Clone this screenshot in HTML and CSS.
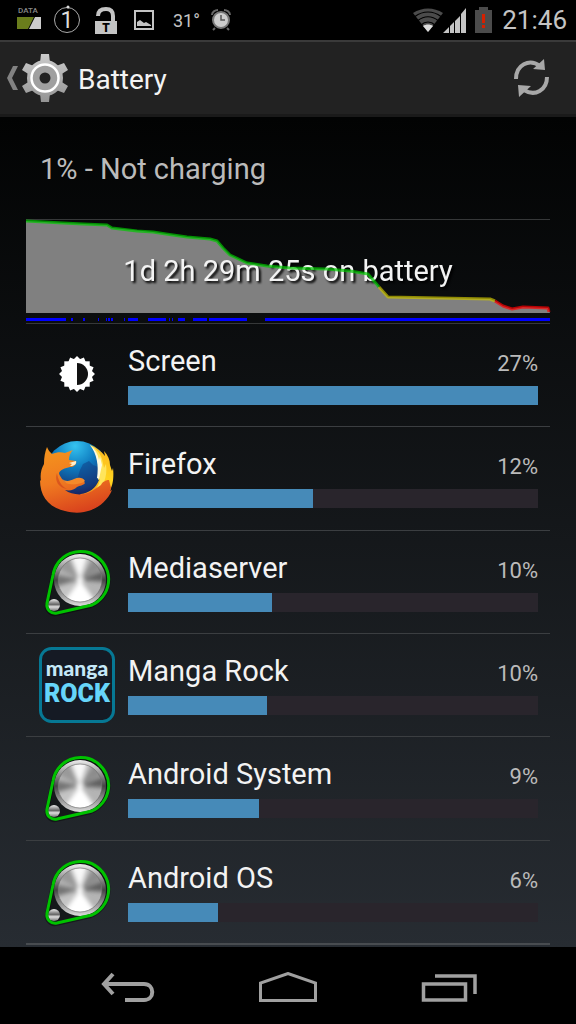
FILE: index.html
```html
<!DOCTYPE html>
<html lang="en">
<head>
<meta charset="utf-8">
<meta name="viewport" content="width=device-width, initial-scale=1">
<title>Battery</title>
<link rel="stylesheet" href="styles.css">
</head>
<body>
<svg class="defs" width="0" height="0" aria-hidden="true">
  <defs>
    <linearGradient id="disc" x1="0" y1="0" x2="0" y2="1"><stop offset="0" stop-color="#eee"/><stop offset=".5" stop-color="#444"/><stop offset="1" stop-color="#ddd"/></linearGradient>
    <linearGradient id="small" x1="0" y1="0" x2="0" y2="1"><stop offset="0" stop-color="#eee"/><stop offset=".45" stop-color="#666"/><stop offset=".65" stop-color="#ddd"/><stop offset="1" stop-color="#777"/></linearGradient>
    <filter id="soft" x="-20%" y="-20%" width="140%" height="140%"><feGaussianBlur stdDeviation="2"/></filter>
    <clipPath id="face"><circle cx="41" cy="36" r="22"/></clipPath>
    <symbol id="service" viewBox="0 0 76 76">
      <path d="M14 31 8 60a8 8 0 0 0 9 10l35-8A28 28 0 1 0 14 31Z" fill="#15181a" stroke="#000" stroke-opacity=".4" stroke-width="4"/>
      <circle cx="41" cy="36" r="26" fill="url(#disc)"/>
      <g clip-path="url(#face)">
        <circle cx="41" cy="36" r="23" fill="#b4b4b4"/>
        <g filter="url(#soft)">
          <path d="M41 36 14 44V30Z" fill="#747474"/>
          <path d="M41 36 16 22 28 10Z" fill="#999"/>
          <path d="M41 36 66 26V38Z" fill="#606060"/>
          <path d="M41 36 56 12 66 24Z" fill="#8c8c8c"/>
          <path d="M41 36 30 8H50Z" fill="#f8f8f8"/>
          <path d="M41 36 22 62H60Z" fill="#fff"/>
          <path d="M41 36 14 44 24 58Z" fill="#c4c4c4"/>
          <circle cx="41" cy="36" r="3" fill="#fff"/>
        </g>
      </g>
      <circle cx="41" cy="36" r="22" fill="none" stroke="#666" stroke-opacity=".6"/>
      <circle cx="15" cy="61" r="6" fill="url(#small)"/>
      <path d="M14 31 8 59c-1 7 4 11 10 10l35-8A28 28 0 1 0 14 31Z" fill="none" stroke="#00c200" stroke-width="3"/>
    </symbol>
  </defs>
</svg>

<header class="status">
  <div class="status-group">
    <svg width="24" height="30" viewBox="0 0 24 30" role="img" aria-label="Data usage">
      <text class="data-label" x="1" y="8">DATA</text>
      <path d="M0 12H17L11 24H0Z" fill="#6a7d1c"/><path d="M18 12h6v12H12Z" fill="#ccc"/>
    </svg>
    <svg class="ring" width="28" height="30" viewBox="0 0 28 30" role="img" aria-label="1">
      <circle cx="14" cy="15" r="12.500" fill="none" stroke="#aaa"/><circle cx="15" cy="2" r="1.500" fill="#ddd"/>
      <text class="ring-number" x="14" y="23">1</text>
    </svg>
    <svg class="lock" width="24" height="30" viewBox="0 0 24 30" role="img" aria-label="Unlocked">
      <path d="M4 11C4 6 7 4 12 4c5 0 7 3 7 7v6" fill="none" stroke="#c4c4c4" stroke-width="4"/>
      <path d="M1 16h22v13H1Z" fill="#c4c4c4"/><text class="lock-letter" x="12" y="27">T</text>
    </svg>
    <svg class="photo" width="20" height="20" viewBox="0 0 20 20" role="img" aria-label="Picture"><path d="M1 1h18v18H1Z" fill="none" stroke="#c4c4c4" stroke-width="2"/><path d="M3 16v-4l3-2 4 3 2-1 5 3v1Z" fill="#c4c4c4"/></svg>
    <span class="temperature">31°</span>
    <svg class="alarm" width="22" height="24" viewBox="0 0 22 24" role="img" aria-label="Alarm">
      <path d="M2 7c0-3 3-5 6-5M20 7c0-3-3-5-6-5M5 20l-2 2M17 20l2 2" fill="none" stroke="#666" stroke-width="2"/>
      <circle cx="11" cy="12" r="8" fill="#ccc" stroke="#777" stroke-width="2"/><path d="M11 7v5h4" fill="none" stroke="#555" stroke-width="1.500"/>
    </svg>
  </div>
  <div class="status-group">
    <svg width="30" height="24" viewBox="0 0 30 24" role="img" aria-label="Wi-Fi">
      <path d="M15 24 0 5C9-1 21-1 30 5Z" fill="#4b4b4b"/><path d="M2 8.500c8-6 18-6 26 0M5 12.500c6-5 14-5 20 0M8 17c4-4 10-4 14 0" fill="none" stroke="#000" stroke-width="1.200"/><path d="m15 24-5-6c3-2 7-2 10 0Z" fill="#ddd"/>
    </svg>
    <svg width="24" height="26" viewBox="0 0 24 26" role="img" aria-label="Signal"><path d="M0 26 6 20v6ZM7 19l4-4v11H7ZM12 14l5-5v17h-5ZM18 7l5-6v25h-5Z" fill="#c4c4c4"/></svg>
    <svg class="cell" width="17" height="26" viewBox="0 0 17 26" role="img" aria-label="Battery low"><path d="M0 3h4V0h9v3h4v23H0Z" fill="#4b4b4b"/><path d="M7 7h3v9H7ZM7 18h3v3H7Z" fill="#d42000"/></svg>
    <time class="clock">21:46</time>
  </div>
</header>

<nav class="action-bar">
  <a class="up" href="#">
    <svg width="12" height="24" viewBox="0 0 12 24" aria-hidden="true"><path d="M7 0h5L6 12l6 12H7L1 12Z" fill="#828282"/></svg>
    <svg width="46" height="50" viewBox="0 0 46 50" aria-hidden="true">
      <defs><linearGradient id="gear" gradientUnits="userSpaceOnUse" x1="0" y1="0" x2="0" y2="50"><stop offset="0" stop-color="#ccc"/><stop offset="1" stop-color="#939393"/></linearGradient></defs>
      <g fill="url(#gear)">
        <circle cx="23" cy="25" r="18"/>
        <path d="M18 10 19 1h8l1 9ZM18 40l1 9h8l1-9Z"/>
        <path d="M7.500 21.800 0 17 4 10l8.500 3.200ZM33.500 36.800 42 40l4-7-7.500-4.800Z"/>
        <path d="M12.500 36.800 4 40l-4-7 7.500-4.800ZM38.500 21.800 46 17l-4-7-8.500 3.200Z"/>
      </g>
      <circle cx="23" cy="25" r="13.500" fill="#a0a0a0" stroke="#fff" stroke-width="2.500"/><circle cx="23" cy="25" r="5.500" fill="#222"/>
    </svg>
    <h1 class="title">Battery</h1>
  </a>
  <button class="refresh" type="button" aria-label="Refresh">
    <svg width="36" height="38" viewBox="0 0 36 38" aria-hidden="true"><path d="M2 20C2 6 15-1 26 7M33 18c0 13-12 20-23 13" fill="none" stroke="#a8a8a8" stroke-width="4"/><path d="m30 0 1 11-12-1ZM5 38 4 26l13 1Z" fill="#a8a8a8"/></svg>
  </button>
</nav>

<main class="content">
  <p class="summary">1% - Not charging</p>
  <svg class="chart" viewBox="0 0 524 105" role="img" aria-label="Battery level over time">
    <path d="M0 .5H524M0 104.500H524" stroke="#363839"/>
    <path d="M0 2 37 4 81 6 86 9 127 13 161 18 184 20 191 22 197 29 204 36 221 44 241 47 264 49 301 50 324 52 342 55 353 68 362 78 464 80 469 82 477 87 486 90 497 88 522 89 524 94H0Z" fill="#808080"/>
    <text class="duration" x="262" y="62">1d 2h 29m 25s on battery</text>
    <g class="level">
      <path d="M0 2 37 4 57 5 81 6 86 9 111 12 127 13 140 15 161 18 184 20 191 22 197 29 204 36 221 44 241 47 264 49 301 50 324 52 342 55 353 68" stroke="#00c800"/>
      <path d="m353 68 9 10 102 2 5 2" stroke="#c8c000"/>
      <path d="m469 82 8 5 9 3 11-2 25 1 1 4" stroke="#f00"/>
    </g>
    <path d="M0 100.500H40M45 100.500h2M57 100.500h2M72 100.500h1M80 100.500h1M82 100.500h2M85 100.500h2M98 100.500h1M102 100.500h10M122 100.500h18M143 100.500h1M146 100.500h1M152 100.500h7M167 100.500h14M183 100.500h38M239 100.500H524" stroke="#00f" stroke-width="3"/>
  </svg>

  <ul class="usage">
    <li class="row">
      <svg class="icon" viewBox="0 0 76 76" aria-hidden="true">
        <g fill="#fff">
          <rect x="25.300" y="24.300" width="25.400" height="25.400"/>
          <rect x="25.300" y="24.300" width="25.400" height="25.400" transform="rotate(22.500 38 37)"/>
          <rect x="25.300" y="24.300" width="25.400" height="25.400" transform="rotate(45 38 37)"/>
          <rect x="25.300" y="24.300" width="25.400" height="25.400" transform="rotate(67.500 38 37)"/>
        </g>
        <path d="M38 26a11 11 0 0 1 0 22Z" fill="#111"/>
      </svg>
      <div class="details"><div class="line"><span class="name">Screen</span><span class="percent">27%</span></div><div class="track"><div class="fill" style="width:100%"></div></div></div>
    </li>
    <li class="row">
      <svg class="icon" viewBox="0 0 76 76" aria-hidden="true">
        <defs>
          <radialGradient id="globe" gradientUnits="userSpaceOnUse" cx="36" cy="6" r="50"><stop offset="0" stop-color="#35c3f0"/><stop offset=".45" stop-color="#0d78bd"/><stop offset="1" stop-color="#18205e"/></radialGradient>
          <linearGradient id="fox" x1=".2" y1="0" x2=".5" y2="1"><stop offset="0" stop-color="#f4941d"/><stop offset=".5" stop-color="#f07a20"/><stop offset="1" stop-color="#d9431d"/></linearGradient>
          <linearGradient id="tail" x1=".7" y1="0" x2=".4" y2="1"><stop offset="0" stop-color="#fbb51f"/><stop offset=".45" stop-color="#ffd51f"/><stop offset="1" stop-color="#ea651c"/></linearGradient>
        </defs>
        <circle cx="38" cy="33" r="32" fill="url(#globe)"/>
        <path d="m44 24 6-3 4 4 5 2-1 8-3 8-7 3-5-6-4-3 2-7Z" fill="#123a80" opacity=".5"/>
        <path d="M51 5c6 2 11 6 15 11l-1-5c4 4 6 9 6 14l2 6 1-3c1 8 0 16-2 20l-2 6-1-1c-3 8-10 14-18 17L36 60l6-6c8-1 15-6 18-14 4-12 1-26-9-35Z" fill="url(#tail)"/>
        <path d="M51 5c6 3 10 8 12 14l2 9 2-4c1 7 0 13-2 18l3-2c-2 8-7 14-13 18l-6 3 1-6c6-3 10-9 11-16l-2 1c3-12 1-25-8-35Z" fill="#ffe55b"/>
        <path d="M51 5c5 4 8 9 9 15l1-3 2 8-3 14-2-1c2-12 0-24-7-33Z" fill="#fffbe0"/>
        <path d="M8 7c1 3 3 5 5 7 5-2 9-2 13-1l8-3c-3 3-4 6-4 10l7 1c1 3-2 6-6 6-5 1-10 3-11 6 0 2 2 4 3 6 3 5 8 5 12 2 4-2 9-2 11 2-2 3-5 2-8 4-3 3-7 4-12 3 8 6 22 6 30-1l6-4c1-3 5-5 8-5l2 8-1 3 2-1c-5 12-16 20-28 22-5 1-12 1-19-1C9 67 1 56 1 40l1 1c-1-6 0-12 3-17 0-7 1-12 3-17Z" fill="url(#fox)"/>
        <path d="m30 23 7-2c1 3-2 5-6 5l2-2Z" fill="#fff0ce"/>
        <path d="M23 39c4 3 8 2 12 0s9-2 11 2c-2 2-5 2-8 3-6 1-12 0-15-5Z" fill="#f58a2a"/>
        <path d="M18 33c1 7 4 13 10 16-8-1-13-8-10-16Z" fill="#c83a1c" opacity=".55"/>
      </svg>
      <div class="details"><div class="line"><span class="name">Firefox</span><span class="percent">12%</span></div><div class="track"><div class="fill" style="width:45%"></div></div></div>
    </li>
    <li class="row">
      <svg class="icon" aria-hidden="true"><use href="#service"/></svg>
      <div class="details"><div class="line"><span class="name">Mediaserver</span><span class="percent">10%</span></div><div class="track"><div class="fill" style="width:35%"></div></div></div>
    </li>
    <li class="row">
      <svg class="icon" viewBox="0 0 76 76" role="img" aria-label="manga ROCK">
        <rect x="1.500" y="1.500" width="73" height="73" rx="11" fill="#151a24" stroke="#067894" stroke-width="3"/>
        <text class="manga" x="38" y="29">manga</text><text class="rock" x="38" y="55">ROCK</text>
      </svg>
      <div class="details"><div class="line"><span class="name">Manga Rock</span><span class="percent">10%</span></div><div class="track"><div class="fill" style="width:34%"></div></div></div>
    </li>
    <li class="row">
      <svg class="icon" aria-hidden="true"><use href="#service"/></svg>
      <div class="details"><div class="line"><span class="name">Android System</span><span class="percent">9%</span></div><div class="track"><div class="fill" style="width:32%"></div></div></div>
    </li>
    <li class="row">
      <svg class="icon" aria-hidden="true"><use href="#service"/></svg>
      <div class="details"><div class="line"><span class="name">Android OS</span><span class="percent">6%</span></div><div class="track"><div class="fill" style="width:22%"></div></div></div>
    </li>
  </ul>
</main>

<footer class="nav-bar">
  <button type="button" aria-label="Back"><svg width="56" height="32" viewBox="0 0 56 32" aria-hidden="true"><path d="M5 12H45c11 0 11 16 0 16H26M14 2 5 12l9 10" fill="none" stroke="#a0a0a0" stroke-width="4"/></svg></button>
  <button type="button" aria-label="Home"><svg width="60" height="32" viewBox="0 0 60 32" aria-hidden="true"><path d="M2.500 28.500V11L30 1.500l27.500 9.500v17.500Z" fill="none" stroke="#a0a0a0" stroke-width="3"/></svg></button>
  <button type="button" aria-label="Recent apps"><svg width="56" height="32" viewBox="0 0 56 32" aria-hidden="true"><path d="M2.500 12h42v16h-42ZM14 4h40v18" fill="none" stroke="#a0a0a0" stroke-width="3.500"/></svg></button>
</footer>
</body>
</html>
```
FILE: styles.css
```css
* { box-sizing: border-box; }

body {
  margin: 0;
  min-height: 100vh;
  display: flex;
  flex-direction: column;
  background: #000;
  color: #f3f3f3;
  font-family: Roboto, "Noto Sans", sans-serif;
  font-size: 29px;
}

svg { display: block; flex: none; }
button { padding: 0; border: 0; background: none; }

.defs { position: absolute; }

.status {
  height: 40px;
  padding: 0 9px 0 17px;
  display: flex;
  justify-content: space-between;
  align-items: center;
  color: #c4c4c4;
}
.status-group { display: flex; align-items: center; }
.data-label { font-size: 8px; font-weight: 500; fill: #888; }
.ring { margin-left: 12px; }
.ring-number { font-size: 23px; text-anchor: middle; fill: #ddd; }
.lock { margin-left: 13px; }
.lock-letter { font-size: 12px; font-weight: 900; text-anchor: middle; fill: #000; }
.photo { margin-left: 16px; }
.temperature { margin-left: 19px; font-size: 18px; }
.alarm { margin-left: 10px; }
.cell { margin-left: 8px; }
.clock { margin-left: 10px; font-size: 26px; line-height: 40px; }

.action-bar {
  height: 77px;
  padding: 0 26px 0 6px;
  display: flex;
  justify-content: space-between;
  align-items: center;
  background: #222;
  border-top: 2px solid #3a3a3a;
  border-bottom: 3px solid #1a1a1a;
}
.up {
  display: flex;
  align-items: center;
  gap: 4px;
  color: inherit;
  text-decoration: none;
}
.title { margin: 0 0 0 6px; padding-top: 4px; font-size: 28px; font-weight: 400; line-height: 40px; }

.content {
  flex: 1;
  display: flex;
  flex-direction: column;
  padding: 0 26px 2px;
  background: linear-gradient(#020303, #272c32);
}
.summary { margin: 0; padding: 32px 14px 30px; line-height: 40px; color: #bbb; }
.chart { width: 100%; height: auto; overflow: visible; }
.duration { font-size: 29px; text-anchor: middle; fill: #f3f3f3; filter: drop-shadow(2px 2px 1px #000); }
.level { fill: none; stroke-width: 3px; stroke-linejoin: round; opacity: .7; }

.usage {
  flex: 1;
  margin: 0;
  padding: 0;
  display: flex;
  flex-direction: column;
  list-style: none;
}
.row {
  flex: 1;
  display: flex;
  align-items: center;
  gap: 13px;
  padding: 0 12px 0 13px;
  border-bottom: 1px solid #3b3e41;
}
.row:last-child { border-bottom: 2px solid #484c50; }
.icon { width: 76px; height: 76px; }
.details { flex: 1; padding-bottom: 4px; }
.line {
  display: flex;
  justify-content: space-between;
  align-items: baseline;
  line-height: 40px;
}
.percent { font-size: 22px; color: #bbb; }
.track { height: 19px; margin-top: 2px; background: #29252c; }
.fill { height: 100%; background: #468ab8; }

.manga { font: 900 21px Lato, sans-serif; text-anchor: middle; fill: #c5e8f8; }
.rock { font: 900 25px Roboto, sans-serif; text-anchor: middle; fill: #66d5fa; }

.nav-bar {
  height: 77px;
  display: flex;
  justify-content: center;
  align-items: center;
  gap: 103px;
  padding-top: 5px;
}
```
